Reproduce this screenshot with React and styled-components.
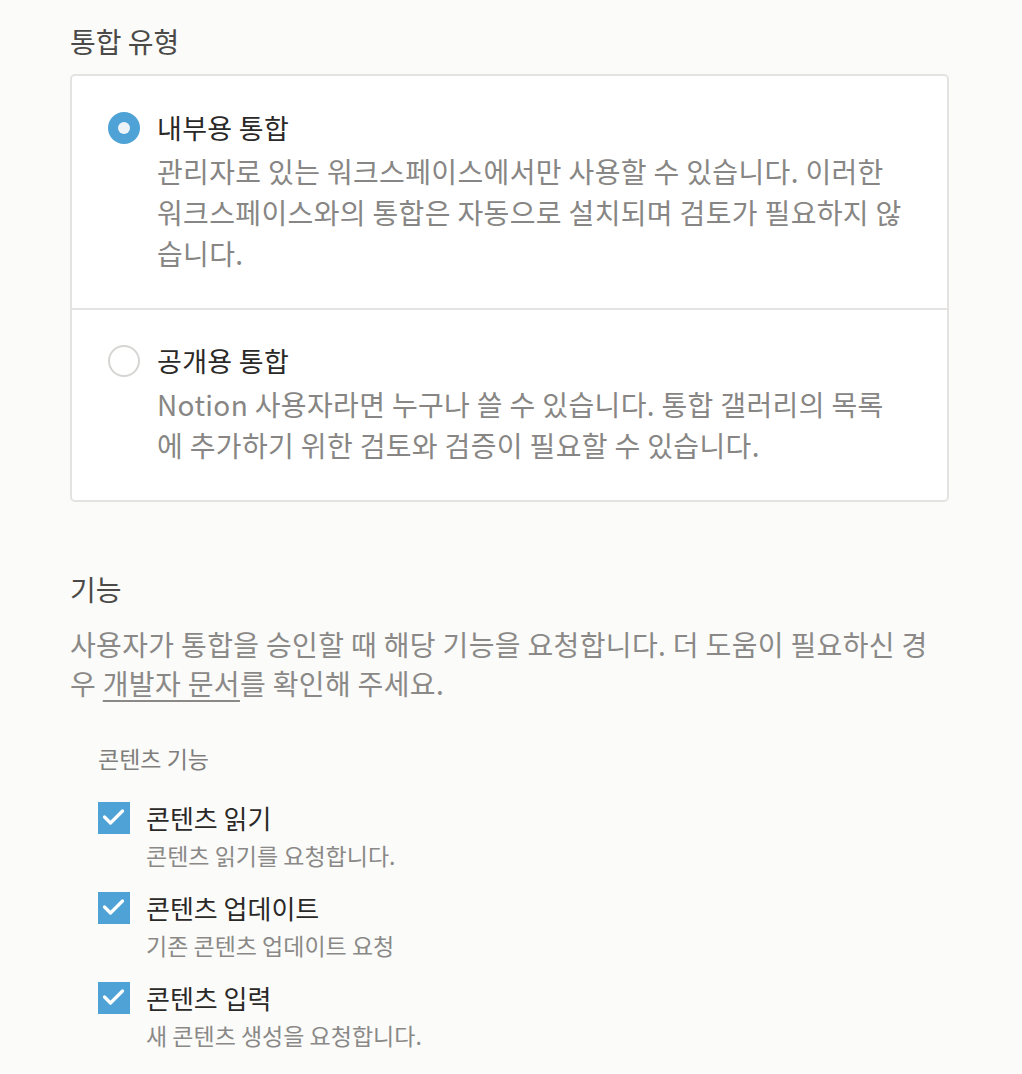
import React from "react";
import styled, { createGlobalStyle } from "styled-components";

const GlobalStyle = createGlobalStyle`
  html, body {
    margin: 0;
    padding: 0;
    background: #fbfbfa;
  }
  body {
    font-family: "Noto Sans CJK KR", "Noto Sans", sans-serif;
    -webkit-font-smoothing: antialiased;
  }
`;

const Page = styled.div`
  padding: 22px 73px 40px 70px;
  width: 1022px;
  box-sizing: border-box;
`;

const SectionTitle = styled.h2`
  margin: 0;
  font-size: 28px;
  font-weight: 400;
  line-height: 38px;
  color: #4b4a48;
`;

const Card = styled.div`
  margin-top: 14px;
  background: #ffffff;
  border: 2px solid #e4e3e1;
  border-radius: 5px;
  width: 879px;
  box-sizing: border-box;
`;

const Option = styled.div`
  display: flex;
  align-items: flex-start;
  gap: 17px;
  padding: ${(p) => (p.$first ? "34px 38px 34px 36px" : "33px 38px 34px 36px")};
  border-top: ${(p) => (p.$first ? "none" : "2px solid #e4e3e1")};
`;

const Radio = styled.span`
  flex: none;
  width: 32px;
  height: 32px;
  margin-top: 2px;
  border-radius: 50%;
  box-sizing: border-box;
  display: flex;
  align-items: center;
  justify-content: center;
  background: ${(p) => (p.$checked ? "#4ea2d6" : "#ffffff")};
  border: ${(p) => (p.$checked ? "none" : "2px solid #d6d5d3")};

  &::after {
    content: "";
    display: ${(p) => (p.$checked ? "block" : "none")};
    width: 12px;
    height: 12px;
    border-radius: 50%;
    background: #eef3f8;
  }
`;

const OptionBody = styled.div`
  flex: 1;
  min-width: 0;
`;

const OptionTitle = styled.div`
  font-size: 27px;
  font-weight: 400;
  line-height: 36px;
  letter-spacing: 0.3px;
  color: #2a2927;
`;

const OptionText = styled.p`
  margin: 5px 0 0;
  font-size: 28px;
  line-height: 41px;
  letter-spacing: 0.35px;
  color: #878684;
`;

const Features = styled.section`
  margin-top: 68px;
`;

const Lead = styled.p`
  margin: 17px 0 0;
  font-size: 28px;
  line-height: 39px;
  letter-spacing: 0.35px;
  color: #8a8987;
  width: 872px;

  a {
    color: #8a8987;
    text-decoration: underline;
    text-underline-offset: 5px;
    text-decoration-thickness: 1.5px;
  }
`;

const Group = styled.div`
  margin-top: 39px;
  padding-left: 28px;
`;

const GroupLabel = styled.div`
  font-size: 23px;
  line-height: 32px;
  color: #7f7e7c;
`;

const CheckList = styled.div`
  display: flex;
  flex-direction: column;
  gap: 22px;
  margin-top: 28px;
`;

const CheckRow = styled.label`
  display: flex;
  align-items: flex-start;
  gap: 16px;
`;

const Box = styled.span`
  flex: none;
  width: 32px;
  height: 32px;
  background: #4ea2d6;
  display: flex;
`;

const CheckTitle = styled.div`
  font-size: 26px;
  font-weight: 400;
  line-height: 32px;
  color: #2a2927;
`;

const CheckText = styled.div`
  font-size: 23px;
  line-height: 30px;
  margin-top: 6px;
  color: #8a8987;
`;

const CheckMark = () => (
  <svg width="32" height="32" viewBox="0 0 32 32" fill="none">
    <path
      d="M6.5 15 L12.5 21 L24.5 9"
      stroke="#ffffff"
      strokeWidth="3.2"
      strokeLinecap="round"
      strokeLinejoin="round"
    />
  </svg>
);

const options = [
  {
    title: "내부용 통합",
    text: "관리자로 있는 워크스페이스에서만 사용할 수 있습니다. 이러한 워크스페이스와의 통합은 자동으로 설치되며 검토가 필요하지 않습니다.",
    checked: true,
  },
  {
    title: "공개용 통합",
    text: "Notion 사용자라면 누구나 쓸 수 있습니다. 통합 갤러리의 목록에 추가하기 위한 검토와 검증이 필요할 수 있습니다.",
    checked: false,
  },
];

const capabilities = [
  { title: "콘텐츠 읽기", text: "콘텐츠 읽기를 요청합니다." },
  { title: "콘텐츠 업데이트", text: "기존 콘텐츠 업데이트 요청" },
  { title: "콘텐츠 입력", text: "새 콘텐츠 생성을 요청합니다." },
];

export default function App() {
  return (
    <>
      <GlobalStyle />
      <Page>
        <SectionTitle>통합 유형</SectionTitle>
        <Card>
          {options.map((o, i) => (
            <Option key={o.title} $first={i === 0}>
              <Radio $checked={o.checked} />
              <OptionBody>
                <OptionTitle>{o.title}</OptionTitle>
                <OptionText>{o.text}</OptionText>
              </OptionBody>
            </Option>
          ))}
        </Card>

        <Features>
          <SectionTitle>기능</SectionTitle>
          <Lead>
            사용자가 통합을 승인할 때 해당 기능을 요청합니다. 더 도움이 필요하신 경우{" "}
            <a href="#">개발자 문서</a>를 확인해 주세요.
          </Lead>
          <Group>
            <GroupLabel>콘텐츠 기능</GroupLabel>
            <CheckList>
              {capabilities.map((c) => (
                <CheckRow key={c.title}>
                  <Box>
                    <CheckMark />
                  </Box>
                  <div>
                    <CheckTitle>{c.title}</CheckTitle>
                    <CheckText>{c.text}</CheckText>
                  </div>
                </CheckRow>
              ))}
            </CheckList>
          </Group>
        </Features>
      </Page>
    </>
  );
}
